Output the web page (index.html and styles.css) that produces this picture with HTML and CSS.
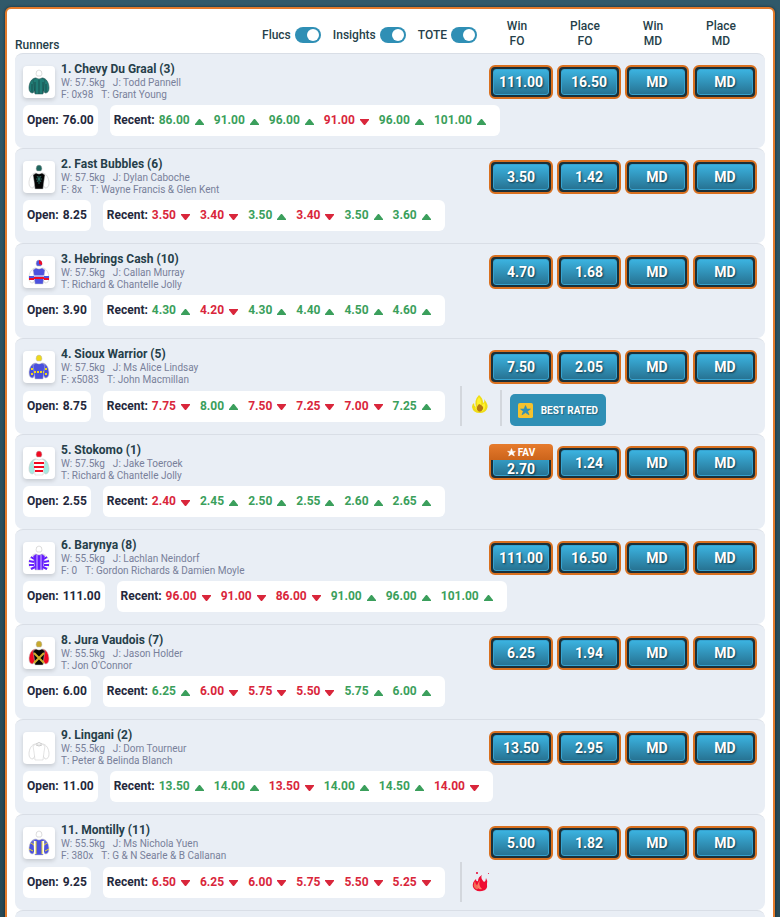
FILE: index.html
```html
<!DOCTYPE html>
<html lang="en">
<head>
<meta charset="UTF-8">
<meta name="viewport" content="width=device-width, initial-scale=1.0">
<title>Runners</title>
<link rel="stylesheet" href="styles.css">
</head>
<body>
<main class="panel">
  <header class="panel-header">
    <h1 class="title">Runners</h1>
    <div class="toggles">
      <label class="toggle">Flucs <input type="checkbox" id="flucsToggle" checked></label>
      <label class="toggle">Insights <input type="checkbox" id="insightsToggle" checked></label>
      <label class="toggle">TOTE <input type="checkbox" id="toteToggle" checked></label>
    </div>
    <div class="columns">
      <span>Win<br>FO</span>
      <span>Place<br>FO</span>
      <span>Win<br>MD</span>
      <span>Place<br>MD</span>
    </div>
  </header>
  <section id="runners"></section>
</main>
<script src="app.js"></script>
</body>
</html>
```
FILE: styles.css
```css
* {
  box-sizing: border-box;
}

body {
  margin: 0;
  height: 100vh;
  overflow: hidden;
  padding: 7px 5px;
  font-family: Roboto, Arial, sans-serif;
  font-size: 12px;
  color: #263f4a;
  background: linear-gradient(#30596a, #264855);
}

.panel {
  padding: 8px;
  border: 2px solid #e27a2b;
  border-radius: 6px;
  background: #fff;
  box-shadow: 0 0 3px rgba(0, 0, 0, 0.5);
}

/* header */
.panel-header {
  display: flex;
  height: 36px;
  padding-right: 12px;
  font-weight: 500;
}

.title {
  margin: 0 auto 0 0;
  align-self: flex-end;
  font-size: 12px;
  font-weight: 500;
  line-height: 16px;
}

.toggles {
  display: flex;
  align-items: center;
  gap: 12px;
  margin-right: 8px;
}

.toggle {
  display: flex;
  align-items: center;
  gap: 4px;
}

.toggle input {
  appearance: none;
  display: flex;
  width: 26px;
  height: 16px;
  margin: 0;
  padding: 2px;
  border-radius: 8px;
  background: #9aa9b3;
  cursor: pointer;
}

.toggle input::before {
  content: "";
  width: 12px;
  height: 12px;
  border-radius: 50%;
  background: #fff;
}

.toggle input:checked {
  justify-content: flex-end;
  background: #2f8fb5;
}

.columns {
  display: flex;
  gap: 4px;
  padding-top: 2px;
  line-height: 15px;
  text-align: center;
}

.columns span {
  width: 64px;
}

/* runner rows */
.runner {
  min-height: 95px;
  padding: 0 8px 8px;
  border-top: 1px solid #d9dee6;
  border-radius: 8px;
  background: #e9eef5;
}

.runner-top {
  display: flex;
  height: 47px;
}

.silk {
  width: 32px;
  height: 32px;
  margin: 12px 6px 0 0;
  border-radius: 4px;
  background: #fff;
  box-shadow: 0 2px 4px rgba(0, 0, 0, 0.15);
}

.details {
  flex: 1;
  padding-top: 7px;
}

.name {
  margin: 0;
  font-size: 12px;
  font-weight: 700;
  line-height: 16px;
}

.meta {
  display: flex;
  gap: 8px;
  margin: 0;
  font-size: 10px;
  line-height: 12px;
  color: #78809a;
}

.odds {
  display: flex;
  gap: 4px;
  padding-top: 11px;
}

.bet {
  position: relative;
  width: 64px;
  height: 34px;
  padding: 2px;
  border: 2px solid #d9701f;
  border-radius: 6px;
  background: #1b3038;
  font-family: inherit;
  font-size: 14px;
  font-weight: 700;
  color: #fff;
  text-shadow: 1px 1px 2px rgba(0, 0, 0, 0.6);
  cursor: pointer;
}

.bet-price {
  display: block;
  border: 1px solid #36a3d0;
  border-radius: 3px;
  line-height: 24px;
  background: linear-gradient(#3bb2df, #277393);
}

.bet.fav .bet-price {
  padding-top: 12px;
  line-height: 12px;
}

.fav-tag {
  position: absolute;
  top: -4px;
  left: -2px;
  right: -2px;
  display: flex;
  justify-content: center;
  align-items: center;
  gap: 2px;
  height: 16px;
  border-radius: 4px 4px 0 0;
  font-size: 10px;
  background: linear-gradient(#e67b2d, #cc641b);
  text-shadow: none;
}

.runner-bottom {
  display: flex;
  align-items: center;
  min-height: 39px;
}

.pill {
  display: flex;
  align-items: center;
  height: 31px;
  margin-right: 12px;
  padding: 0 4px;
  border-radius: 6px;
  font-weight: 700;
  line-height: 15px;
  white-space: nowrap;
  color: #24283c;
  background: #fff;
}

.pill-label {
  margin-right: 4px;
}

.fluc {
  display: flex;
  align-items: center;
  margin-right: 10px;
}

.fluc svg {
  margin: 2px 0 0 5px;
}

.up {
  color: #3b9f5c;
}

.down {
  color: #d9263b;
}

.insight {
  display: flex;
  align-items: center;
  height: 40px;
  margin-left: 3px;
  padding: 0 8px;
  border-left: 2px solid #d3d7dd;
}

.rated-wrap {
  align-self: flex-end;
  height: 36px;
  padding: 4px 8px 0;
  border-left: 2px solid #d3d7dd;
}

.rated {
  display: flex;
  align-items: center;
  gap: 8px;
  height: 32px;
  padding: 0 8px;
  border-radius: 5px;
  font-size: 10px;
  font-weight: 700;
  color: #fff;
  text-shadow: 1px 1px 1px rgba(0, 0, 0, 0.3);
  background: #2f8fb5;
}

.hidden-flucs .pill,
.hidden-insights .insight,
.hidden-insights .rated-wrap,
.hidden-tote .bet.tote {
  visibility: hidden;
}
```
FILE: app.js
```javascript
const SLEEVES = 'M13 12C8 12 6 18 6 22Q6 27 10 27L13 22Z M19 12C24 12 26 18 26 22Q26 27 22 27L19 22Z';
const BODY = 'M13 12Q16 14 19 12L22 14L21 20L20 28H12L11 20L10 14Z';

// cap, body and sleeve colours, then the pattern drawn over them
const silks = {
  teal: ['#fff', '#207d76', '#207d76', '<path d="M16 14V28M12 16V27M20 16V27M9 18V26M23 18V26" stroke="#173d40" stroke-width=".7" fill="none"/>', '#24514f'],
  bubbles: ['#20655d', '#050505', '#fff', '<path d="M16 15V23M13 18H19M14 15L18 21M18 15L14 21" stroke="#2f7a70" stroke-width=".8" fill="none"/>'],
  sash: ['#4c52df', '#4c52df', '#fff', '<path d="M6 21H11M21 21H26" stroke="#4c52df" stroke-width="2"/><path d="M6 23H11M21 23H26M11 22H21" stroke="#f00b25" stroke-width="2"/><path d="M11 20H21" stroke="#fff"/><path d="M16 4Q20 5 19 9L16 8Z" fill="#f00b25"/>'],
  spots: ['#efd91b', '#4a50dc', '#4a50dc', '<path d="M11 21H21" stroke="#efd91b" stroke-width="2" stroke-dasharray="2 1"/><path d="M9 17V27M23 17V27" stroke="#efd91b" stroke-width="2" stroke-dasharray="2 3"/>'],
  hoops: ['#f20a22', '#fff', '#a5e9e2', '<path d="M11 16H21M11 20H21M12 24H20" stroke="#f20a22" stroke-width="2"/>'],
  purple: ['#fff', '#651cff', '#fff', '<path d="M11 17L8 15M11 20L6 19M11 23L6 23M12 25L8 27M21 17L24 15M21 20L26 19M21 23L26 23M20 25L24 27" stroke="#651cff" stroke-width="2"/><path d="M14 13V28M18 13V28" stroke="#fff" stroke-width=".7"/>'],
  cross: ['#c7a92e', '#050505', '#f10a22', '<path d="M11 16L21 26M21 16L11 26" stroke="#d1b02a" stroke-width="2"/>'],
  white: ['', '#fff', '#fff', '<path d="M13 13Q16 15 19 13" fill="none" stroke="#ccc"/>'],
  stripes: ['#fff', '#4c52df', '#4c52df', '<path d="M12 14V27M20 14V27" stroke="#fff" stroke-width="2"/><path d="M13 14V27M19 14V27M8 16L11 18M24 16L21 18M6 22L10 24M26 22L22 24" stroke="#e9d529"/>']
};

const runners = [
  { name: '1. Chevy Du Graal (3)', w: '57.5kg', j: 'Todd Pannell', f: '0x98', t: 'Grant Young', silk: 'teal', open: '76.00', flucs: '+86.00 +91.00 +96.00 -91.00 +96.00 +101.00', odds: ['111.00', '16.50'] },
  { name: '2. Fast Bubbles (6)', w: '57.5kg', j: 'Dylan Caboche', f: '8x', t: 'Wayne Francis & Glen Kent', silk: 'bubbles', open: '8.25', flucs: '-3.50 -3.40 +3.50 -3.40 +3.50 +3.60', odds: ['3.50', '1.42'] },
  { name: '3. Hebrings Cash (10)', w: '57.5kg', j: 'Callan Murray', t: 'Richard & Chantelle Jolly', silk: 'sash', open: '3.90', flucs: '+4.30 -4.20 +4.30 +4.40 +4.50 +4.60', odds: ['4.70', '1.68'] },
  { name: '4. Sioux Warrior (5)', w: '57.5kg', j: 'Ms Alice Lindsay', f: 'x5083', t: 'John Macmillan', silk: 'spots', open: '8.75', flucs: '-7.75 +8.00 -7.50 -7.25 -7.00 +7.25', odds: ['7.50', '2.05'], flame: 'yellow', rated: true },
  { name: '5. Stokomo (1)', w: '57.5kg', j: 'Jake Toeroek', t: 'Richard & Chantelle Jolly', silk: 'hoops', open: '2.55', flucs: '-2.40 +2.45 +2.50 +2.55 +2.60 +2.65', odds: ['2.70', '1.24'], fav: true },
  { name: '6. Barynya (8)', w: '55.5kg', j: 'Lachlan Neindorf', f: '0', t: 'Gordon Richards & Damien Moyle', silk: 'purple', open: '111.00', flucs: '-96.00 -91.00 -86.00 +91.00 +96.00 +101.00', odds: ['111.00', '16.50'] },
  { name: '8. Jura Vaudois (7)', w: '55.5kg', j: 'Jason Holder', t: "Jon O'Connor", silk: 'cross', open: '6.00', flucs: '+6.25 -6.00 -5.75 -5.50 +5.75 +6.00', odds: ['6.25', '1.94'] },
  { name: '9. Lingani (2)', w: '55.5kg', j: 'Dom Tourneur', t: 'Peter & Belinda Blanch', silk: 'white', open: '11.00', flucs: '+13.50 +14.00 -13.50 +14.00 +14.50 -14.00', odds: ['13.50', '2.95'] },
  { name: '11. Montilly (11)', w: '55.5kg', j: 'Ms Nichola Yuen', f: '380x', t: 'G & N Searle & B Callanan', silk: 'stripes', open: '9.25', flucs: '-6.50 -6.25 -6.00 -5.75 -5.50 -5.25', odds: ['5.00', '1.82'], flame: 'red' }
];

const STAR = 'M8 1L10 6L15 6L11 9L13 14L8 11L3 14L5 9L1 6L6 6Z';

const flames = {
  yellow: '<path d="M9 0Q13 3 13 8Q15 7 14 4Q19 10 17 14Q15 18 10 18Q3 18 2 12Q2 9 4 8Q4 11 6 12Q4 5 9 0Z" fill="#efdc16"/><path d="M9 2Q12 6 11 10Q14 10 14 7Q17 13 13 16Q5 17 5 12Q8 13 7 8Q7 4 9 2Z" fill="#fff32c"/><path d="M9 9Q14 11 13 14Q11 18 8 16Q5 13 9 9Z" fill="#b67a12"/>',
  red: '<path d="M12 4Q10 7 14 11Q16 10 16 7Q18 10 17 13Q18 19 12 20Q5 21 3 16Q2 11 6 8Q6 11 8 10Q8 6 12 4Z" fill="#ef0c32"/><path d="M5 10Q2 15 6 18Q9 19 8 15Q5 13 5 10Z" fill="#f36c55"/><path d="M10 9Q6 14 8 17Q10 19 12 18Q8 15 10 9Z" fill="#ff7b66"/><path d="M6 1H8V3H6ZM18 2H19V3H18Z" fill="#e73c61"/>'
};

function drawSilk(key) {
  const [cap, body, sleeve, pattern, line = '#c9c9c9'] = silks[key];
  const head = cap ? `<path d="M13 8Q13 4 16 4Q19 4 19 8L18 10H14Z" fill="${cap}" stroke="#bbb" stroke-width=".5"/>` : '<path d="M13 12Q16 9 19 12" fill="none" stroke="#ccc"/>';
  return `<svg class="silk" viewBox="0 0 32 32">${head}<path d="${SLEEVES}" fill="${sleeve}" stroke="${line}" stroke-width=".6"/><path d="${BODY}" fill="${body}" stroke="${line}" stroke-width=".5"/>${pattern}</svg>`;
}

function drawFluc(item) {
  const up = item[0] === '+';
  const arrow = up ? 'M0 6V5L4 0H5L9 5V6Z' : 'M0 0H9V1L5 6H4L0 1Z';
  return `<span class="fluc ${up ? 'up' : 'down'}">${item.slice(1)}<svg width="9" height="6"><path d="${arrow}" fill="currentColor"/></svg></span>`;
}

function drawBet(price, index, runner) {
  const fav = runner.fav && index === 0;
  const tag = fav ? `<span class="fav-tag"><svg width="9" height="9" viewBox="0 0 16 16"><path d="${STAR}" fill="#fff" stroke="#fff"/></svg>FAV</span>` : '';
  return `<button type="button" class="bet ${fav ? 'fav' : ''} ${index > 1 ? 'tote' : ''}">${tag}<span class="bet-price">${price}</span></button>`;
}

function drawRunner(r) {
  const insight = r.flame ? `<div class="insight"><svg width="22" height="22" viewBox="0 0 22 22">${flames[r.flame]}</svg></div>` : '';
  const rated = r.rated ? `<div class="rated-wrap"><div class="rated"><svg width="15" height="15" viewBox="0 0 16 16"><rect width="16" height="16" rx="2" fill="#f5c22c"/><path d="${STAR}" fill="#2f8fb5" stroke="#2f8fb5" transform="translate(2 2) scale(.75)"/></svg>BEST RATED</div></div>` : '';
  return `<article class="runner">
    <div class="runner-top">
      ${drawSilk(r.silk)}
      <div class="details">
        <h2 class="name">${r.name}</h2>
        <p class="meta"><span>W: ${r.w}</span><span>J: ${r.j}</span></p>
        <p class="meta">${r.f ? `<span>F: ${r.f}</span>` : ''}<span>T: ${r.t.replace(/&/g, '&amp;')}</span></p>
      </div>
      <div class="odds">${[...r.odds, 'MD', 'MD'].map((p, i) => drawBet(p, i, r)).join('')}</div>
    </div>
    <div class="runner-bottom">
      <div class="pill"><span class="pill-label">Open:</span>${r.open}</div>
      <div class="pill"><span class="pill-label">Recent:</span>${r.flucs.split(' ').map(drawFluc).join('')}</div>
      ${insight}${rated}
    </div>
  </article>`;
}

const list = document.getElementById('runners');
list.innerHTML = runners.map(drawRunner).join('') + '<article class="runner"></article>';

['flucs', 'insights', 'tote'].forEach((key) => {
  document.getElementById(key + 'Toggle').addEventListener('change', (event) => {
    list.classList.toggle('hidden-' + key, !event.target.checked);
  });
});
```
